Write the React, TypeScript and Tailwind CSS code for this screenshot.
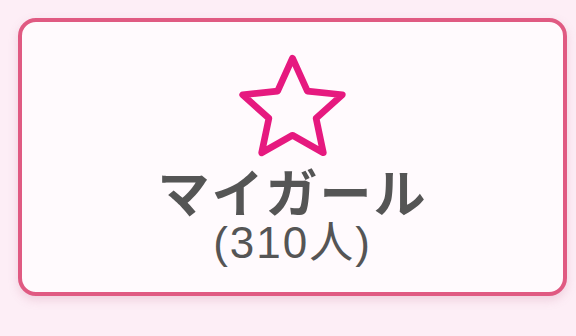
export default function App() {
  return (
    <div className="w-[576px] h-[336px] bg-[#fdeef6] pt-[18px] pl-[18px]">
      <div
        className="w-[549px] h-[278px] rounded-[18px] border-[4px] border-[#e05a82] bg-[#fffafd] shadow-[0_4px_10px_rgba(200,120,150,0.25)] flex flex-col items-center"
        style={{ fontFamily: '"Noto Sans CJK JP", "Noto Sans", sans-serif' }}
      >
        <svg width="113" height="108" viewBox="1 1 22 21" className="mt-[30px] shrink-0">
          <polygon
            points="12,2.2 14.9,8.6 21.7,9.3 16.6,13.9 18,20.6 12,17.2 6,20.6 7.4,13.9 2.3,9.3 9.1,8.6"
            fill="none"
            stroke="#e6197f"
            strokeWidth="1.3"
            strokeLinejoin="round"
          />
        </svg>
        <div className="text-[52px] font-bold leading-none text-[#555555] mt-[5px] tracking-[2px]">
          マイガール
        </div>
        <div
          className="text-[44px] leading-none text-[#555555] mt-[4px] tracking-[2px]"
          style={{ fontFamily: '"Liberation Sans", "Noto Sans CJK JP", sans-serif' }}
        >
          (310人)
        </div>
      </div>
    </div>
  );
}
